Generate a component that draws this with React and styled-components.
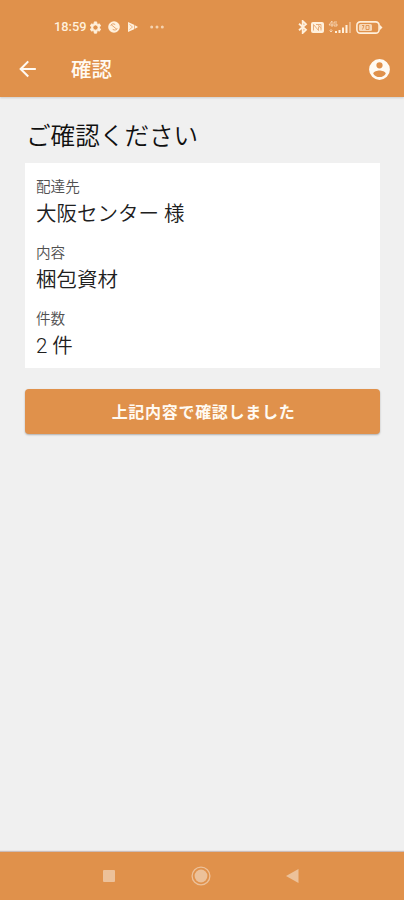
import styled, { createGlobalStyle } from "styled-components"

const GlobalStyle = createGlobalStyle`
  * {
    box-sizing: border-box;
  }

  body {
    margin: 0;
    background-color: #f0f0f0;
    font-family: Roboto, 'Noto Sans CJK JP', sans-serif;
  }
`

// Styled components
const Screen = styled.div`
  display: flex;
  flex-direction: column;
  height: 900px;
  background-color: #f0f0f0;
`

const Header = styled.header`
  height: 97px;
  background-color: #e0914b;
  color: #fff;
  box-shadow: 0 1px 2px rgba(0, 0, 0, 0.15);
`

const StatusBar = styled.div`
  display: flex;
  align-items: center;
  justify-content: space-between;
  height: 41px;
  padding: 13px 21px 0 54px;
  color: #fff0dc;
`

const StatusGroup = styled.div`
  display: flex;
  align-items: center;
`

const Clock = styled.span`
  width: 34px;
  font-size: 12.8px;
  font-weight: 500;
  line-height: 16px;
  white-space: nowrap;
`

const Toolbar = styled.div`
  display: flex;
  align-items: center;
  height: 56px;
  padding: 0 12px 0 15px;
`

const IconButton = styled.button`
  display: flex;
  padding: 0;
  border: none;
  background: none;
  color: #fffaf2;
`

const Title = styled.h1`
  flex: 1;
  margin: 2px 0 0 31px;
  color: #fffaf2;
  font-size: 20.5px;
  font-weight: 500;
  line-height: 30px;
`

const Content = styled.main`
  flex: 1;
  padding: 19px 24px 0 25px;
`

const Heading = styled.h2`
  margin: 0 0 11px 1px;
  color: #101010;
  font-family: 'Noto Sans CJK JP', sans-serif;
  font-size: 24.6px;
  font-weight: 350;
  line-height: 36px;
`

const Card = styled.dl`
  height: 205px;
  margin: 0 0 21px;
  padding: 14px 11px 0;
  background-color: #fff;
`

const Field = styled.div`
  height: 66px;
`

const Label = styled.dt`
  color: #505050;
  font-size: 14.6px;
  font-weight: 350;
  line-height: 21px;
`

const Value = styled.dd`
  margin: 1px 0 0;
  color: #202020;
  font-size: 20.5px;
  font-weight: 350;
  line-height: 30px;
`

const ConfirmButton = styled.button`
  display: block;
  width: 100%;
  height: 45px;
  padding: 0 0 2px 2px;
  border: none;
  border-radius: 4px;
  background-color: #e0914b;
  box-shadow: 0 1px 2px rgba(0, 0, 0, 0.28);
  color: #fffaf2;
  font-family: inherit;
  font-size: 16px;
  font-weight: 700;
  letter-spacing: 0.7px;
`

const NavBar = styled.nav`
  display: flex;
  align-items: center;
  justify-content: space-between;
  height: 48px;
  padding: 0 105px 0 103px;
  background-color: #e0914b;
  box-shadow: 0 -1px 1px rgba(120, 70, 60, 0.3);
  color: #ecc19a;
`

const Icon = styled.svg`
  display: block;
  flex: none;
  margin-left: ${(props) => props.$gap || 0}px;
  fill: currentColor;
`

const fields = [
  { label: "配達先", value: "大阪センター 様" },
  { label: "内容", value: "梱包資材" },
  { label: "件数", value: "2 件" },
]

const gearPath =
  "M19.14 12.94a7.07 7.07 0 0 0 0-1.88l2.03-1.58-1.92-3.32-2.39.96a7 7 0 0 0-1.62-.94L14.88 3h-3.84l-.36 3.18a7 7 0 0 0-1.62.94l-2.39-.96-1.92 3.32 2.03 1.58a7.07 7.07 0 0 0 0 1.88l-2.03 1.58 1.92 3.32 2.39-.96c.5.38 1.04.7 1.62.94l.36 3.18h3.84l.36-3.18a7 7 0 0 0 1.62-.94l2.39.96 1.92-3.32zM12.96 16.2a4.2 4.2 0 1 1 0-8.4 4.2 4.2 0 0 1 0 8.4z"

function SystemStatus() {
  return (
    <StatusBar>
      <StatusGroup>
        <Clock>18:59</Clock>
        <Icon width="15" height="15" viewBox="1 0 24 24">
          <path d={gearPath} fillRule="evenodd" stroke="currentColor" strokeWidth="1.4" strokeLinejoin="round" />
        </Icon>
        <Icon $gap={5} width="12" height="12" viewBox="0 0 12 12">
          <circle cx="6" cy="6" r="5.8" />
          <path d="M2.7 4.5c1-2 3-2.1 4.5-.9M3 3.5l6 5M4.7 8.4c2 1.1 3.7.7 4.5-1" fill="none" stroke="#e7a66e" strokeWidth="1" />
        </Icon>
        <Icon $gap={7} width="12" height="12" viewBox="0 0 12 12">
          <path d="M1 1l6 2.7 4 2.3-4 2.3L1 11z" />
          <path d="M2.5 3.5l3 2.5-3 2.5M7.5 4v4" fill="none" stroke="#e7a66e" strokeWidth=".8" />
        </Icon>
        <Icon $gap={11} width="14" height="4" viewBox="0 0 14 4" opacity=".7">
          <circle cx="1.7" cy="2" r="1.5" />
          <circle cx="7" cy="2" r="1.5" />
          <circle cx="12.3" cy="2" r="1.5" />
        </Icon>
      </StatusGroup>
      <StatusGroup>
        <Icon width="10" height="14" viewBox="0 0 10 14">
          <path d="M1 3.8l7 6L4.7 13V1L8 4.2l-7 6" fill="none" stroke="currentColor" strokeWidth="1.8" />
        </Icon>
        <Icon $gap={3} width="13" height="11" viewBox="0 0 13 11">
          <rect width="13" height="11" rx="2" />
          <path d="M2.5 8.5v-6l5 6v-4M5 2.5h5v6M7 2.5l3 4" fill="none" stroke="#e7a66e" strokeWidth=".9" />
        </Icon>
        <Icon $gap={4} width="24" height="14" viewBox="0 0 24 14">
          <path d="M4 7V1L1 5h4M9 2H6v4h3V4H7M3 9v3M1.5 10.5L3 12l1.5-1.5" fill="none" stroke="currentColor" strokeWidth=".8" opacity=".8" />
          <path d="M7 11h2v2H7zM10.5 10h2v3h-2zM14 7.5h2V13h-2zM17.5 5h2v8h-2z" />
          <path d="M21 2h2v11h-2z" opacity=".4" />
        </Icon>
        <Icon $gap={4} width="27" height="13" viewBox="0 0 27 13">
          <rect x=".9" y=".9" width="22.2" height="11.2" rx="3.4" fill="none" stroke="currentColor" strokeWidth="1.6" />
          <rect x="3" y="3" width="13" height="7" rx="1.5" opacity=".75" />
          <path d="M6 4.5h2L6.5 8.5M10 4.5h3v4h-3z" fill="none" stroke="#e0914b" strokeWidth=".9" />
          <path d="M24 4l2.5 2.5L24 9z" />
        </Icon>
      </StatusGroup>
    </StatusBar>
  )
}

function App() {
  return (
    <Screen>
      <GlobalStyle />
      <Header>
        <SystemStatus />
        <Toolbar>
          <IconButton aria-label="戻る">
            <Icon width="25" height="25" viewBox="0 0.5 24 24">
              <path d="M20 11H7.83l5.59-5.59L12 4l-8 8 8 8 1.41-1.41L7.83 13H20v-2z" />
            </Icon>
          </IconButton>
          <Title>確認</Title>
          <IconButton aria-label="アカウント">
            <Icon width="25" height="25" viewBox="0 0 24 24">
              <path
                fillRule="evenodd"
                d="M12 2a10 10 0 1 0 0 20 10 10 0 0 0 0-20zm0 3a3 3 0 1 1 0 6 3 3 0 0 1 0-6zm0 14.2A7.2 7.2 0 0 1 6 16c.03-1.99 4-3.08 6-3.08s5.97 1.09 6 3.08a7.2 7.2 0 0 1-6 3.2z"
              />
            </Icon>
          </IconButton>
        </Toolbar>
      </Header>

      <Content>
        <Heading>ご確認ください</Heading>
        <Card>
          {fields.map((field) => (
            <Field key={field.label}>
              <Label>{field.label}</Label>
              <Value>{field.value}</Value>
            </Field>
          ))}
        </Card>
        <ConfirmButton>上記内容で確認しました</ConfirmButton>
      </Content>

      <NavBar>
        <Icon width="12" height="12" viewBox="0 0 12 12">
          <rect width="12" height="12" rx="1" />
        </Icon>
        <Icon width="20" height="20" viewBox="0 0 20 20">
          <circle cx="10" cy="10" r="6.4" />
          <circle cx="10" cy="10" r="8.9" fill="none" stroke="currentColor" strokeWidth="1.3" />
        </Icon>
        <Icon width="13" height="14" viewBox="0 0 13 14">
          <path d="M0 7l12.5-7v14z" />
        </Icon>
      </NavBar>
    </Screen>
  )
}

export default App
